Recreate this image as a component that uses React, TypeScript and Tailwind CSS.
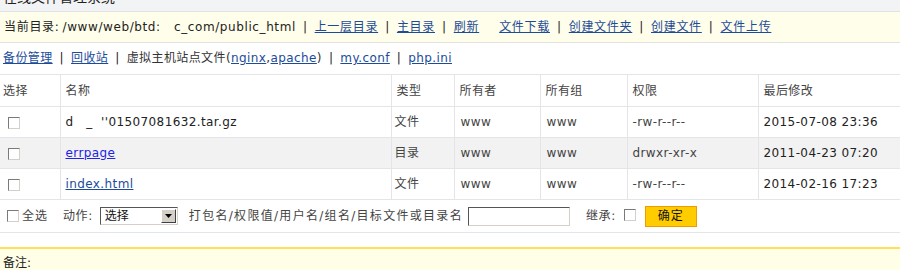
import React from "react";

const font = { fontFamily: '"DejaVu Sans", "Noto Sans CJK SC", sans-serif' };

function Box() {
  return <span className="inline-block w-[12px] h-[12px] border border-t-[#7a7a7a] border-l-[#7a7a7a] border-r-[#d4d0c8] border-b-[#d4d0c8] bg-white align-middle" />;
}

function Sep() {
  return <span className="text-[#222] mx-[7px]">|</span>;
}

function A({ children, cls = "text-[#1c4b9b]" }: { children: React.ReactNode; cls?: string }) {
  return <span className={`underline ${cls}`}>{children}</span>;
}

const rows = [
  { name: "d\u00a0\u00a0\u00a0_\u00a0\u00a0''01507081632.tar.gz", link: false, cls: "", type: "文件", perm: "-rw-r--r--", time: "2015-07-08 23:36", bg: "bg-white" },
  { name: "errpage", link: true, cls: "text-[#2323e6]", type: "目录", perm: "drwxr-xr-x", time: "2011-04-23 07:20", bg: "bg-[#f2f2f2]" },
  { name: "index.html", link: true, cls: "text-[#1c4b9b]", type: "文件", perm: "-rw-r--r--", time: "2014-02-16 17:23", bg: "bg-white" },
];

const cols = ["w-[60px]", "w-[331px]", "w-[63px]", "w-[86px]", "w-[87px]", "w-[131px]", "w-[142px]"];

export default function App() {
  return (
    <div className="w-[900px] h-[270px] overflow-hidden bg-white text-[12px] text-[#333]" style={font}>
      <div className="h-[12px] overflow-hidden bg-[#f2f3f5] border-b border-[#dfe2e8]">
        <div className="-mt-[12px] pl-[3px] text-[14px] leading-[18px] text-[#222]">在线文件管理系统</div>
      </div>
      <div className="h-[31px] flex items-center pl-[4px] bg-[#fffeea] border-b border-[#e2e2e2] tracking-[0.7px]">
        <span className="text-[#222]">当前目录:</span>
        <span className="ml-[3px] text-[#222] tracking-[0.6px]">/www/web/btd:&nbsp;&nbsp;&nbsp;c_com/public_html</span>
        <Sep />
        <A>上一层目录</A>
        <Sep />
        <A>主目录</A>
        <Sep />
        <A>刷新</A>
        <span className="w-[20px]" />
        <A>文件下载</A>
        <Sep />
        <A>创建文件夹</A>
        <Sep />
        <A>创建文件</A>
        <Sep />
        <A>文件上传</A>
      </div>
      <div className="h-[30px] flex items-center pl-[3px] tracking-[0.4px]">
        <A>备份管理</A>
        <Sep />
        <A>回收站</A>
        <Sep />
        <span className="text-[#333]">虚拟主机站点文件(</span>
        <A>nginx</A>
        <span>,</span>
        <A>apache</A>
        <span>)</span>
        <Sep />
        <A>my.conf</A>
        <Sep />
        <A>php.ini</A>
      </div>
      <table className="mt-[1px] border-collapse table-fixed w-[900px] tracking-[0.4px]">
        <thead>
          <tr className="h-[32px] border-t border-b border-[#e3e5ea]">
            {["选择", "名称", "类型", "所有者", "所有组", "权限", "最后修改"].map((h, i) => (
              <td key={h} className={`${cols[i]} ${i === 0 ? "pl-[3px]" : "pl-[5px] border-l border-[#e3e5ea]"} text-[#444] font-normal`}>
                {h}
              </td>
            ))}
          </tr>
        </thead>
        <tbody>
          {rows.map((r) => (
            <tr key={r.time} className={`h-[31px] border-b border-[#e3e5ea] ${r.bg}`}>
              <td className="pl-[8px]"><Box /></td>
              <td className="pl-[5px] border-l border-[#e3e5ea]">
                {r.link ? <A cls={r.cls}>{r.name}</A> : <span className="text-[#222]">{r.name}</span>}
              </td>
              <td className="pl-[3px] border-l border-[#e3e5ea] text-[#444]">{r.type}</td>
              <td className="pl-[6px] border-l border-[#e3e5ea] text-[#444]">www</td>
              <td className="pl-[6px] border-l border-[#e3e5ea] text-[#444]">www</td>
              <td className="pl-[5px] border-l border-[#e3e5ea] text-[#444]">{r.perm}</td>
              <td className="pl-[5px] border-l border-[#e3e5ea] text-[#222]">{r.time}</td>
            </tr>
          ))}
        </tbody>
      </table>
      <div className="h-[33px] flex items-center border-b border-[#e3e5ea] pl-[7px] text-[#444]">
        <Box />
        <span className="ml-[3px] tracking-[1px]">全选</span>
        <span className="ml-[15px] tracking-[0.6px]">动作:</span>
        <div className="ml-[7px] w-[78px] h-[18px] flex items-center border border-t-[#555] border-l-[#555] border-r-[#d4d0c8] border-b-[#d4d0c8] bg-white">
          <span className="flex-1 pl-[4px] text-[#111]">选择</span>
          <span className="w-[15px] h-[14px] mr-[1px] flex items-center justify-center bg-[#d4d0c8] border border-t-white border-l-white border-r-[#404040] border-b-[#404040]">
            <svg width="7" height="4" viewBox="0 0 7 4"><path d="M0 0h7L3.5 4z" fill="#000" /></svg>
          </span>
        </div>
        <span className="ml-[11px] tracking-[1.3px]">打包名/权限值/用户名/组名/目标文件或目录名</span>
        <span className="ml-[5px] w-[102px] h-[19px] border border-t-[#555] border-l-[#555] border-r-[#d4d0c8] border-b-[#d4d0c8] bg-white" />
        <span className="ml-[16px] tracking-[0.6px]">继承:</span>
        <span className="ml-[8px] -mt-[4px]"><Box /></span>
        <span className="ml-[9px] w-[52px] h-[21px] flex items-center justify-center bg-[#ffcc00] border border-[#f29a00] text-[#111] tracking-[1px]">确定</span>
      </div>
      <div className="mt-[14px] h-[30px] bg-[#fffee6] border-t-2 border-[#ffe05a] flex items-center pl-[3px] text-[#222]">
        备注:
      </div>
    </div>
  );
}
